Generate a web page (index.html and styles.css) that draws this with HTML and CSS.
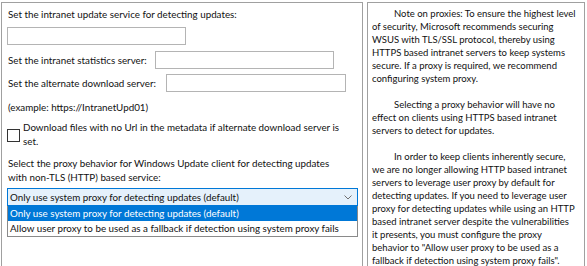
FILE: index.html
```html
<!DOCTYPE html>
<html lang="en">
<head>
    <meta charset="UTF-8">
    <title>Windows Update - Intranet Settings</title>
    <link rel="stylesheet" href="styles.css">
</head>
<body>
    <!-- Options -->
    <div class="options">
        <p class="label first">Set the intranet update service for detecting updates:</p>
        <input type="text" class="text-box wide">

        <div class="row stats-row">
            <span class="label stats-label">Set the intranet statistics server:</span>
            <input type="text" class="text-box stats-box">
        </div>

        <div class="row alt-row">
            <span class="label alt-label">Set the alternate download server:</span>
            <input type="text" class="text-box alt-box">
        </div>

        <p class="label example">(example: https://IntranetUpd01)</p>

        <div class="check-row">
            <span class="check-box"></span>
            <span class="label">Download files with no Url in the metadata if alternate download server is set.</span>
        </div>

        <p class="label proxy-label">Select the proxy behavior for Windows Update client for detecting updates with non-TLS (HTTP) based service:</p>

        <div class="dropdown">
            <span>Only use system proxy for detecting updates (default)</span>
            <svg class="chevron" width="8" height="5" viewBox="0 0 8 5">
                <polyline points="0.5,0.5 4,4 7.5,0.5" fill="none" stroke="#707070" stroke-width="1"/>
            </svg>
        </div>
        <ul class="dropdown-list">
            <li class="selected">Only use system proxy for detecting updates (default)</li>
            <li>Allow user proxy to be used as a fallback if detection using system proxy fails</li>
        </ul>
    </div>

    <!-- Help text -->
    <div class="help">
        <p>Note on proxies: To ensure the highest level of security, Microsoft recommends securing WSUS with TLS/SSL protocol, thereby using HTTPS based intranet servers to keep systems secure. If a proxy is required, we recommend configuring system proxy.</p>
        <p>Selecting a proxy behavior will have no effect on clients using HTTPS based intranet servers to detect for updates.</p>
        <p>In order to keep clients inherently secure, we are no longer allowing HTTP based intranet servers to leverage user proxy by default for detecting updates. If you need to leverage user proxy for detecting updates while using an HTTP based intranet server despite the vulnerabilities it&nbsp;presents, you must configure the proxy behavior to "Allow user proxy to be used as a fallback if detection using system proxy fails".</p>
    </div>
</body>
</html>
```

FILE: styles.css
```css
body {
    font-family: Lato, "Open Sans", sans-serif;
    font-size: 9.8px;
    color: #111;
    margin: 0;
    padding: 2px 0 0 1px;
    background-color: white;
    display: flex;
    gap: 4px;
    height: 264px;
    overflow: hidden;
}

.options {
    width: 362px;
    height: 280px;
    border: 1px solid #a0a0a0;
    padding: 0 4px;
    box-sizing: border-box;
    display: flex;
    flex-direction: column;
    align-items: flex-start;
}

.label {
    line-height: 14px;
    margin: 0;
    padding-left: 2px;
    white-space: nowrap;
}

.first {
    margin-top: 4px;
}

.text-box {
    height: 18px;
    border: 1px solid #b4b4b4;
    box-sizing: border-box;
    margin: 0;
    padding: 0;
    background: white;
}

.wide {
    width: 179px;
    margin-top: 6px;
    margin-left: 1px;
}

.row {
    display: flex;
    align-items: center;
}

.stats-row {
    margin-top: 6px;
}

.stats-label {
    width: 147px;
}

.stats-box {
    width: 179px;
}

.alt-row {
    margin-top: 5px;
}

.alt-label {
    width: 158px;
}

.alt-box {
    width: 180px;
}

.example {
    margin-top: 8px;
}

.check-row {
    display: flex;
    align-items: center;
    margin-top: 6px;
    width: 340px;
}

.check-row .label {
    white-space: normal;
    padding-left: 3px;
}

.check-box {
    flex: none;
    width: 11px;
    height: 11px;
    border: 1px solid #333;
    margin-left: 1px;
    margin-top: 2px;
}

.proxy-label {
    margin-top: 8px;
    white-space: normal;
    width: 335px;
}

.dropdown {
    margin-top: 4px;
    margin-left: 1px;
    width: 351px;
    height: 18px;
    box-sizing: border-box;
    border: 1px solid #0078d7;
    background-color: #e5f1fb;
    display: flex;
    align-items: center;
    justify-content: space-between;
    padding: 0 5px 0 2px;
    line-height: 14px;
}

.dropdown-list {
    list-style: none;
    margin: 0 0 0 1px;
    padding: 0;
    width: 351px;
    box-sizing: border-box;
    border: 1px solid #8a8a8a;
    border-top: none;
}

.dropdown-list li {
    height: 15px;
    line-height: 15px;
    padding-left: 2px;
}

.dropdown-list li.selected {
    background-color: #0078d7;
    color: white;
}

.help {
    width: 218px;
    height: 280px;
    border: 1px solid #a0a0a0;
    box-sizing: border-box;
    padding: 4px 6px 0 4px;
    font-size: 9.5px;
}

.help p {
    margin: 0 0 13px 0;
    line-height: 13px;
    text-indent: 22px;
}
```
